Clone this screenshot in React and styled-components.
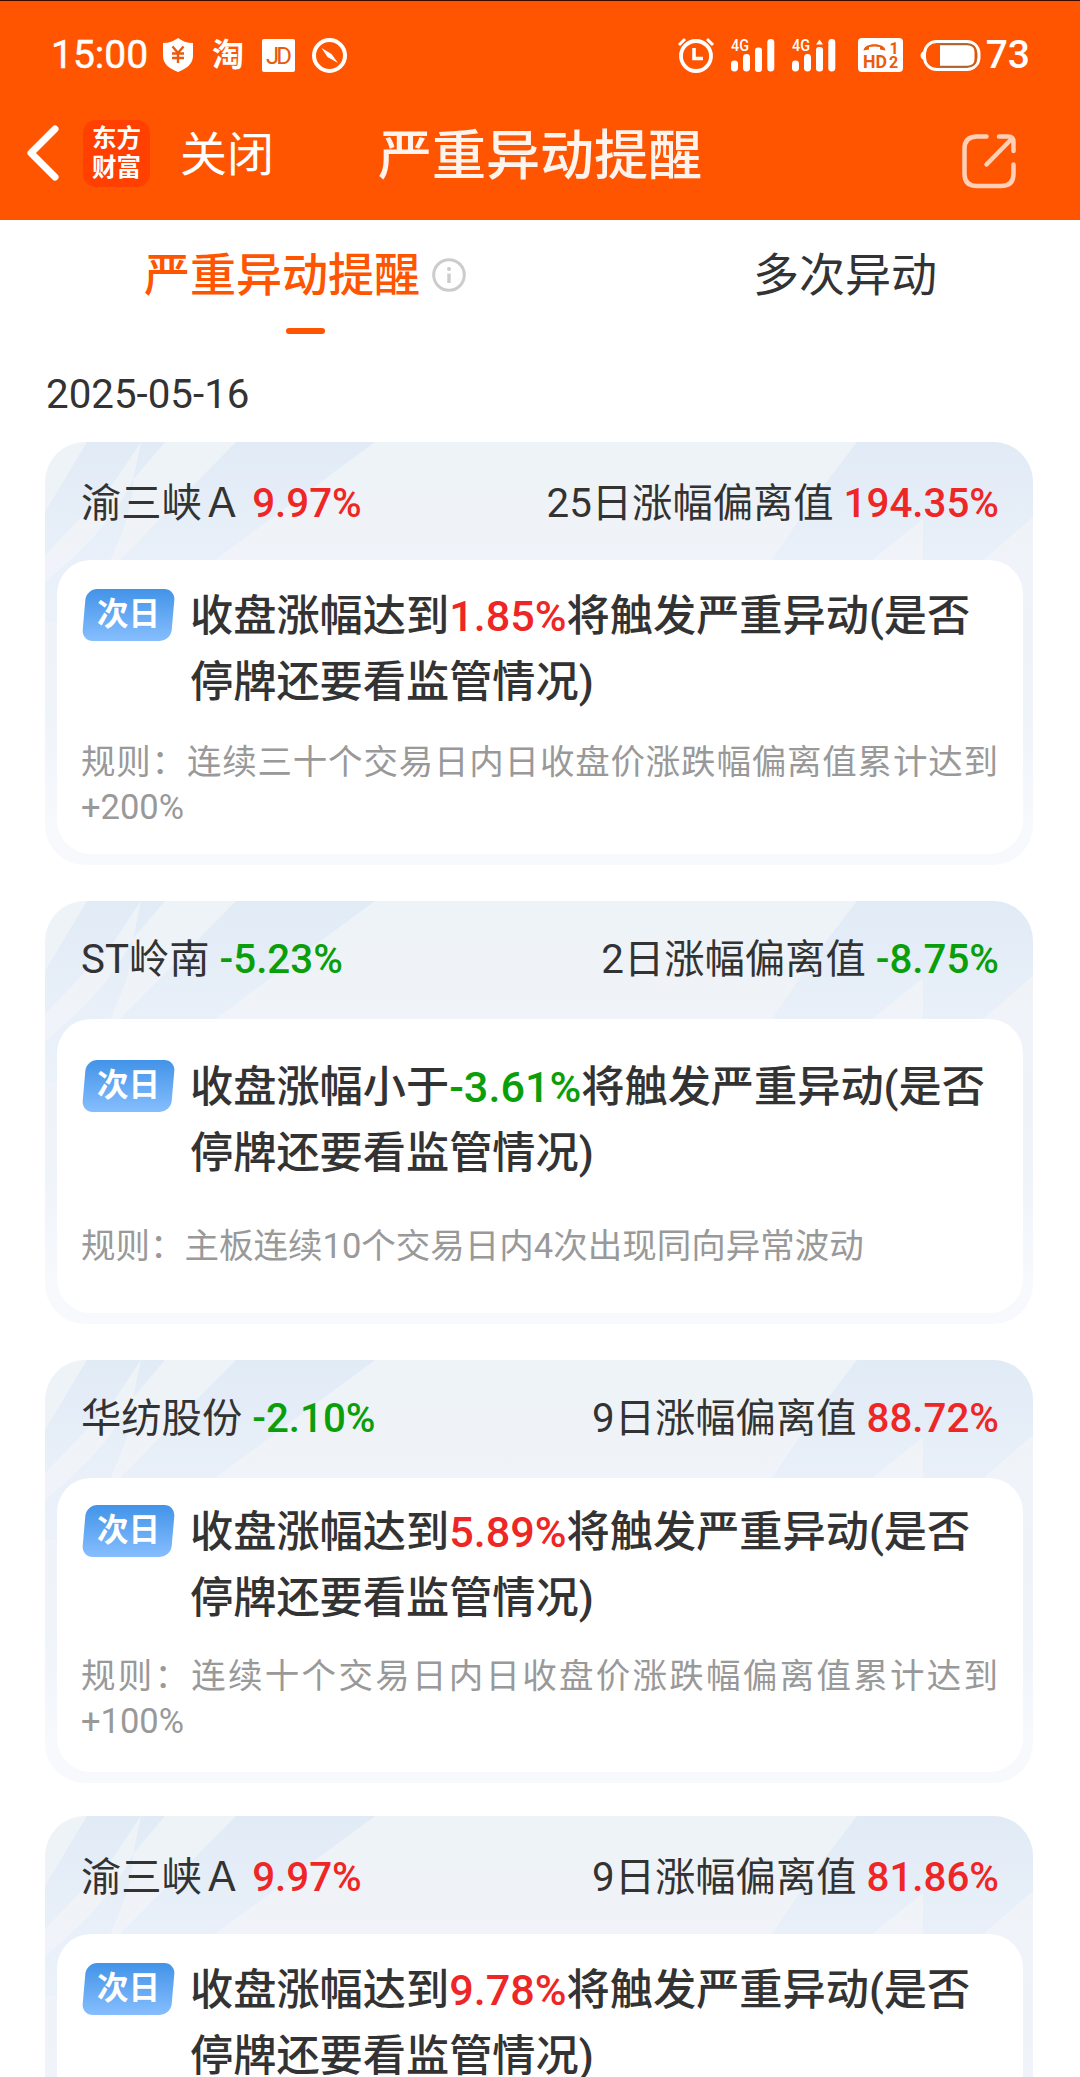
import React, {useState} from "react";
import styled, {createGlobalStyle} from "styled-components";

const GlobalStyle = createGlobalStyle`
  body {
    margin: 0;
    background: #fff;
    color: #333;
    font-family: Roboto, "Noto Sans CJK SC", sans-serif;
  }
  * {
    box-sizing: border-box;
  }
`;

const Page = styled.div`
  width: 1080px;
  height: 2077px;
  overflow: hidden;
`;

const Header = styled.header`
  height: 220px;
  background: #ff5500;
  border-top: 1px solid #3c0800;
  color: #fff;
`;

const StatusBar = styled.div`
  display: flex;
  justify-content: space-between;
  align-items: center;
  height: 108px;
  padding: 0 50px 0 51px;
  font-size: 39px;
  font-weight: 500;
`;

const StatusGroup = styled.div`
  display: flex;
  align-items: center;
  gap: 17px;

  svg {
    display: block;
    overflow: visible;
  }
`;

const Clock = styled.span`
  width: 95px;
  font-weight: 400;
  -webkit-text-stroke: 0.5px #fff;
`;

const TaoBadge = styled.span`
  width: 35px;
  padding-left: 2px;
  font-size: 32px;
  font-weight: 700;
  line-height: 34px;
`;

const Battery = styled.span`
  display: flex;
  align-items: center;
  gap: 5px;
  line-height: 40px;
`;

const NavBar = styled.div`
  display: grid;
  grid-template-columns: 1fr auto 1fr;
  align-items: center;
  height: 92px;
  padding: 0 26px;
`;

const NavLeft = styled.div`
  display: flex;
  align-items: center;
  margin-top: -4px;
`;

const Logo = styled.div`
  width: 67px;
  height: 67px;
  margin: 0 30px 0 23px;
  padding-top: 4px;
  border-radius: 13px;
  background: #ff4000;
  font-size: 24.5px;
  font-weight: 700;
  line-height: 29px;
  text-align: center;
`;

const CloseText = styled.span`
  padding-top: 3px;
  font-size: 47px;
  line-height: 60px;
`;

const Title = styled.h1`
  margin: 4px 0 0;
  font-size: 54px;
  font-weight: 500;
  line-height: 70px;
  color: #fff3ee;
`;

const ShareButton = styled.div`
  display: flex;
  justify-content: flex-end;
  padding: 12px 38px 0 0;
`;

const Tabs = styled.nav`
  display: flex;
  height: 132px;
`;

const Tab = styled.div`
  display: flex;
  flex-direction: column;
  align-items: center;
  width: ${props => props.width}px;
  padding: 23px 0 0 35px;
  font-size: 46px;
  font-weight: ${props => (props.active ? 500 : 400)};
  line-height: 64px;
  color: ${props => (props.active ? "#ff5500" : "#333")};

  &::after {
    content: "";
    width: 39px;
    height: 6px;
    margin-top: 21px;
    border-radius: 3px;
    background: ${props => (props.active ? "#ff5500" : "transparent")};
  }
`;

const TabLabel = styled.span`
  display: flex;
  align-items: center;
  gap: 12px;
`;

const DateText = styled.div`
  height: 90px;
  padding-left: 46px;
  font-size: 40.3px;
  line-height: 86px;
`;

const CardList = styled.div`
  display: flex;
  flex-direction: column;
  padding: 0 47px 0 45px;
`;

const Card = styled.section`
  position: relative;
  flex: none;
  height: 423px;
  margin-bottom: ${props => props.gap}px;
  padding: 0 10px 0 11.5px;
  border-radius: 40px;
  overflow: hidden;
  background: linear-gradient(#eef3f7 0%, #f0f3f9 28%, #eff4fa 65%, #f7f9fc 90%);
`;

const CardPattern = styled.svg`
  position: absolute;
  top: 0;
  left: 0;
`;

const CardHead = styled.div`
  position: relative;
  display: flex;
  justify-content: space-between;
  height: 117.5px;
  padding: ${props => props.shift}px 24px 0 24.5px;
  font-size: 40.3px;
  line-height: 117px;
  white-space: pre;
`;

const Percent = styled.span`
  font-weight: 500;
  color: ${props => (props.value.startsWith("-") ? "#0a9f0a" : "#ee2626")};
`;

const CardBody = styled.div`
  position: relative;
  display: flex;
  flex-direction: column;
  justify-content: space-evenly;
  height: 294px;
  padding: 0 25px ${props => props.lift}px 24.5px;
  border-radius: 34px;
  background: #fff;
`;

const Notice = styled.div`
  display: flex;
  align-items: flex-start;
  gap: 17px;
`;

const DayTag = styled.div`
  flex: none;
  width: 89px;
  height: 52px;
  margin: 5px 0 0 3px;
  border-radius: 11px;
  background: linear-gradient(#4293e8, #86befe);
  transform: skewX(-5deg);
  color: #fff;
  font-size: 31.5px;
  font-weight: 700;
  line-height: 52px;
  text-align: center;

  span {
    display: block;
    transform: skewX(5deg);
  }
`;

const NoticeText = styled.p`
  margin: 0;
  font-size: 43.2px;
  font-weight: 500;
  line-height: 66px;
`;

const Rule = styled.p`
  min-height: 52px;
  margin: 0;
  font-size: 34.5px;
  line-height: 45px;
  color: #999;
  text-align: justify;
`;

const alerts = [
  {
    name: "渝三峡Ａ",
    change: "9.97%",
    days: 25,
    deviation: "194.35%",
    action: "达到",
    target: "1.85%",
    rule: "连续三十个交易日内日收盘价涨跌幅偏离值累计达到+200%",
    shift: 2.5,
    lift: 0,
    gap: 36,
  },
  {
    name: "ST岭南",
    change: "-5.23%",
    days: 2,
    deviation: "-8.75%",
    action: "小于",
    target: "-3.61%",
    rule: "主板连续10个交易日内4次出现同向异常波动",
    shift: 0,
    lift: 0,
    gap: 36,
  },
  {
    name: "华纺股份",
    change: "-2.10%",
    days: 9,
    deviation: "88.72%",
    action: "达到",
    target: "5.89%",
    rule: "连续十个交易日内日收盘价涨跌幅偏离值累计达到+100%",
    shift: 0,
    lift: 6,
    gap: 33,
  },
  {
    name: "渝三峡Ａ",
    change: "9.97%",
    days: 9,
    deviation: "81.86%",
    action: "达到",
    target: "9.78%",
    rule: "连续十个交易日内日收盘价涨跌幅偏离值累计达到+100%",
    shift: 2.5,
    lift: 0,
    gap: 0,
  },
];

const ShieldIcon = () => (
  <svg width="30" height="34" viewBox="0 0 30 34">
    <path d="M15 0C19 3 24 5 30 5V18C30 26 23 31 15 34C7 31 0 26 0 18V5C6 5 11 3 15 0Z" fill="#fff"/>
    <path d="M9.5 8.5L15 15L20.5 8.5M15 15V25M9 15.5H21M9 20H21" fill="none" stroke="#e85a10" strokeWidth="2.4"/>
  </svg>
);

const JdIcon = () => (
  <svg width="33" height="33" viewBox="0 0 33 33">
    <rect width="33" height="33" rx="2" fill="#fff"/>
    <text x="4" y="25" fontSize="24" fontFamily="Roboto" fontWeight="400" fill="#e85a10" textLength="26">JD</text>
  </svg>
);

const CompassIcon = () => (
  <svg width="35" height="35" viewBox="0 0 35 35">
    <circle cx="17.5" cy="17.5" r="15.5" fill="none" stroke="#fff" strokeWidth="4"/>
    <path d="M9.5 10L19.5 16L26 25L15.5 19Z" fill="#fff"/>
  </svg>
);

const AlarmIcon = () => (
  <svg width="36" height="35" viewBox="0 0 36 35">
    <circle cx="18" cy="18" r="15" fill="none" stroke="#fff" strokeWidth="3.8"/>
    <path d="M16 10V20.5H25" fill="none" stroke="#fff" strokeWidth="3.6"/>
    <path d="M1 7L7 1M35 7L29 1" stroke="#fff" strokeWidth="3"/>
  </svg>
);

const SignalIcon = ({split}) => (
  <svg width="44" height="34" viewBox="0 0 44 34">
    <text x="0" y="13" fontSize="16" fontFamily="Roboto" fontWeight="500" fill="#fff" textLength="18" lengthAdjust="spacingAndGlyphs">4G</text>
    <g fill="#fff">
      <rect x="0" y="22.5" width="7" height="11" rx="3.4"/>
      <rect x="12" y="16" width="7" height="17.5" rx="3.4"/>
      <rect x="24" y={split ? 9 : 9.5} width="7" height="24.5" rx="3"/>
      <rect x="36.3" y="1" width="7" height="32.5" rx="3.4"/>
      {split && <path d="M24 6.5L27.5 1.5L31 6.5Z"/>}
    </g>
  </svg>
);

const HdIcon = () => (
  <svg width="50" height="34" viewBox="-5 0 50 34">
    <rect width="45" height="34" rx="4" fill="#fff"/>
    <path d="M5.5 12.5C6 4 27 4 27.5 12.5L22 11.5V9Q16.5 8 11 9V11.5Z" fill="#ec5a0c"/>
    <g fill="#ec5a0c" fontFamily="Roboto" fontWeight="700">
      <text x="5" y="30" fontSize="19" textLength="24" lengthAdjust="spacingAndGlyphs">HD</text>
      <text x="31.5" y="15.5" fontSize="16">1</text>
      <text x="31" y="30" fontSize="16">2</text>
    </g>
  </svg>
);

const BatteryIcon = () => (
  <svg width="61" height="31" viewBox="0 0 61 31">
    <rect x="4.5" y="1.5" width="54.5" height="28" rx="12" fill="none" stroke="#fff" strokeWidth="3"/>
    <path d="M3.5 11V20C-0.5 18 -0.5 13 3.5 11Z" fill="#fff"/>
    <path d="M20 4.5H47Q56 4.5 56 12V19Q56 26.5 47 26.5H20" fill="none" stroke="#b0652c" strokeWidth="1.5"/>
    <path d="M20 5.2H47Q54.5 5.2 54.5 12V19Q54.5 25.8 47 25.8H20Z" fill="#fff"/>
  </svg>
);

const BackIcon = () => (
  <svg width="34" height="56" viewBox="0 0 34 56">
    <path d="M29 4L5 28L29 52" fill="none" stroke="#fff" strokeWidth="7" strokeLinecap="round" strokeLinejoin="round"/>
  </svg>
);

const ShareIcon = () => (
  <svg width="54" height="55" viewBox="0 0 54 55">
    <g fill="none" stroke="#ffcfb8" strokeWidth="4.5" strokeLinecap="round" strokeLinejoin="round">
      <path d="M24.5 2.5H15Q2.5 2.5 2.5 15V40Q2.5 52 15 52H39Q51.5 52 51.5 40V30.5"/>
      <path d="M37 2.5H46Q51.5 2.5 51.5 8V17M50 4.5L24.5 30.5"/>
    </g>
  </svg>
);

const InfoIcon = () => (
  <svg width="34" height="34" viewBox="0 0 34 34">
    <circle cx="17" cy="17" r="15.3" fill="none" stroke="#ccc" strokeWidth="3"/>
    <circle cx="17" cy="11" r="2" fill="#ccc"/>
    <path d="M17 15.5V25" stroke="#ccc" strokeWidth="3.4"/>
  </svg>
);

const AlertCard = ({alert}) => (
  <Card gap={alert.gap}>
    <CardPattern width="988" height="423" viewBox="0 0 988 423">
      <defs>
        <linearGradient id="beam" x1="0" y1="0" x2="0" y2="240" gradientUnits="userSpaceOnUse">
          <stop offset="0" stopColor="#e1ebf6"/>
          <stop offset="0.5" stopColor="#e9f0f9"/>
          <stop offset="1" stopColor="#e9f0f9" stopOpacity="0"/>
        </linearGradient>
      </defs>
      <g fill="url(#beam)">
        <path d="M42 0H96L68 42L0 113V70Z"/>
        <path d="M96 0H120L88 38Z"/>
        <path d="M88 38C88 70 76 92 66 117L40 180H0V141C32 112 62 88 88 38Z"/>
        <path d="M191 0H330L170 118H75Z"/>
        <path d="M812 0H988V75L938 118H878V77L827 118H727L766 60Z"/>
      </g>
    </CardPattern>
    <CardHead shift={alert.shift}>
      <span>{alert.name} <Percent value={alert.change}>{alert.change}</Percent></span>
      <span>{alert.days}日涨幅偏离值 <Percent value={alert.deviation}>{alert.deviation}</Percent></span>
    </CardHead>
    <CardBody lift={alert.lift}>
      <Notice>
        <DayTag><span>次日</span></DayTag>
        <NoticeText>
          收盘涨幅{alert.action}<Percent value={alert.target}>{alert.target}</Percent>将触发严重异动(是否停牌还要看监管情况)
        </NoticeText>
      </Notice>
      <Rule>规则：{alert.rule}</Rule>
    </CardBody>
  </Card>
);

export default function App() {
  const [tab, setTab] = useState("serious");

  return (
    <>
      <GlobalStyle/>
      <Page>
        <Header>
          <StatusBar>
            <StatusGroup>
              <Clock>15:00</Clock>
              <ShieldIcon/>
              <TaoBadge>淘</TaoBadge>
              <JdIcon/>
              <CompassIcon/>
            </StatusGroup>
            <StatusGroup>
              <AlarmIcon/>
              <SignalIcon/>
              <SignalIcon split/>
              <HdIcon/>
              <Battery><BatteryIcon/>73</Battery>
            </StatusGroup>
          </StatusBar>
          <NavBar>
            <NavLeft>
              <BackIcon/>
              <Logo>东方<br/>财富</Logo>
              <CloseText>关闭</CloseText>
            </NavLeft>
            <Title>严重异动提醒</Title>
            <ShareButton><ShareIcon/></ShareButton>
          </NavBar>
        </Header>
        <Tabs>
          <Tab width={575} active={tab === "serious"} onClick={() => setTab("serious")}>
            <TabLabel>严重异动提醒<InfoIcon/></TabLabel>
          </Tab>
          <Tab width={505} active={tab === "multiple"} onClick={() => setTab("multiple")}>
            <TabLabel>多次异动</TabLabel>
          </Tab>
        </Tabs>
        <DateText>2025-05-16</DateText>
        <CardList>
          {alerts.map((alert, index) => <AlertCard key={index} alert={alert}/>)}
        </CardList>
      </Page>
    </>
  );
}
